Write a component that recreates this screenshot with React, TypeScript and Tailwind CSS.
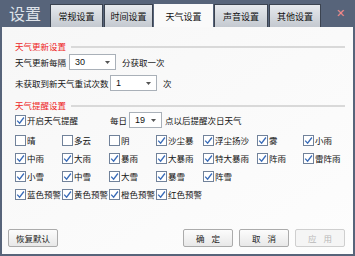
import React from "react";

const font = { fontFamily: '"Noto Sans CJK SC", "Noto Sans", sans-serif' };

function Check({ checked, label }: { checked: boolean; label: string }) {
  return (
    <div className="flex items-center gap-[1px]">
      <div className="w-[11px] h-[11px] border border-[#71829a] bg-white flex items-center justify-center shrink-0">
        {checked && (
          <svg width="9" height="9" viewBox="0 0 9 9">
            <path d="M1.2 4.6 L3.6 7.2 L7.9 1.5" stroke="#3a6cb8" strokeWidth="1.3" fill="none" />
          </svg>
        )}
      </div>
      <span className="text-[8.5px] leading-none text-[#111] whitespace-nowrap">{label}</span>
    </div>
  );
}

function Select({ value, w }: { value: string; w: string }) {
  return (
    <div className={`${w} h-[16px] border border-[#a9b0b8] bg-white flex items-center justify-between pl-[5px] pr-[5px] shrink-0`}>
      <span className="text-[9px] leading-none text-[#111]" style={{ fontFamily: '"Liberation Sans", sans-serif' }}>{value}</span>
      <svg width="5" height="3" viewBox="0 0 5 3">
        <path d="M0 0 L5 0 L2.5 3 Z" fill="#555" />
      </svg>
    </div>
  );
}

function Section({ title }: { title: string }) {
  return (
    <div className="flex items-center gap-[5px] h-[11px] pl-[13px] pr-[8px]">
      <span className="text-[8.5px] leading-none text-[#ee1c24] whitespace-nowrap">{title}</span>
      <div className="flex-1 h-[2px] bg-[#d9d9d9]" />
    </div>
  );
}

function Btn({ label, disabled, spaced }: { label: string; disabled?: boolean; spaced?: boolean }) {
  return (
    <div
      className={`w-[50px] h-[18px] border rounded-[2px] flex items-center justify-center text-[8.5px] leading-none whitespace-nowrap ${
        spaced ? "gap-[7px]" : "gap-0"
      } ${
        disabled
          ? "border-[#cfcfcf] text-[#b8b8b8] bg-[#f5f5f5]"
          : "border-[#ababab] text-[#222] bg-gradient-to-b from-[#fcfcfc] to-[#e8e8e8]"
      }`}
    >
      {label.split("").map((c, i) => (
        <span key={i}>{c}</span>
      ))}
    </div>
  );
}

const cols = ["w-[47px]", "w-[47px]", "w-[47px]", "w-[47px]", "w-[54px]", "w-[46px]", "w-[46px]"];

const rows: [string, boolean][][] = [
  [["晴", false], ["多云", false], ["阴", false], ["沙尘暴", true], ["浮尘扬沙", true], ["雾", true], ["小雨", true]],
  [["中雨", true], ["大雨", true], ["暴雨", true], ["大暴雨", true], ["特大暴雨", true], ["阵雨", true], ["雷阵雨", true]],
  [["小雪", true], ["中雪", true], ["大雪", true], ["暴雪", true], ["阵雪", true]],
  [["蓝色预警", true], ["黄色预警", true], ["橙色预警", true], ["红色预警", true]],
];

const tabs: [string, string][] = [
  ["常规设置", "w-[53px]"],
  ["时间设置", "w-[49px]"],
  ["天气设置", "w-[59px]"],
  ["声音设置", "w-[54px]"],
  ["其他设置", "w-[52px]"],
];

export default function App() {
  return (
    <div className="w-[355px] h-[256px] bg-[#57647a] flex flex-col overflow-hidden" style={font}>
      <div className="h-[27px] flex items-end relative shrink-0">
        <div className="absolute left-[9px] top-[4px] text-[16px] leading-[19px] text-[#dfe3ea]">设置</div>
        <div className="flex items-end gap-[1px] ml-[50px]">
          {tabs.map(([t, w]) => (
            <div
              key={t}
              className={`${w} h-[23px] flex items-center justify-center text-[9px] leading-none border border-b-0 whitespace-nowrap ${
                t === "天气设置"
                  ? "bg-[#fafafa] border-[#fafafa] text-[#111]"
                  : "bg-gradient-to-b from-[#e6e9ed] to-[#c4c9d0] border-[#3b4350] text-[#111]"
              }`}
            >
              {t}
            </div>
          ))}
        </div>
        <div className="absolute right-[10px] top-[7px] text-[#f28b8b] text-[11px] leading-none">✕</div>
      </div>
      <div className="flex-1 mx-[2px] mb-[2px] bg-gradient-to-br from-[#f7f7f7] to-[#fdfdfd] flex flex-col">
        <div className="mt-[14px]">
          <Section title="天气更新设置" />
        </div>
        <div className="flex items-center mt-[2px] pl-[13px] text-[8.5px] text-[#111] leading-none whitespace-nowrap">
          <span className="w-[54px]">天气更新每隔</span>
          <Select value="30" w="w-[47px]" />
          <span className="ml-[6px]">分获取一次</span>
        </div>
        <div className="flex items-center mt-[5px] pl-[13px] text-[8.5px] text-[#111] leading-none whitespace-nowrap">
          <span className="w-[95px]">未获取到新天气重试次数</span>
          <Select value="1" w="w-[47px]" />
          <span className="ml-[6px]">次</span>
        </div>
        <div className="mt-[9px]">
          <Section title="天气提醒设置" />
        </div>
        <div className="flex items-center mt-[1px] pl-[13px] text-[8.5px] text-[#111] leading-none whitespace-nowrap">
          <div className="w-[95px]">
            <Check checked label="开启天气提醒" />
          </div>
          <span className="w-[19px]">每日</span>
          <Select value="19" w="w-[33px]" />
          <span className="ml-[3px]">点以后提醒次日天气</span>
        </div>
        <div className="flex flex-col gap-[6px] mt-[6px] pl-[13px]">
          {rows.map((r, i) => (
            <div key={i} className="flex h-[12px] items-center">
              {r.map(([l, c], j) => (
                <div key={l} className={`${cols[j]} shrink-0`}>
                  <Check checked={c} label={l} />
                </div>
              ))}
            </div>
          ))}
        </div>
        <div className="mt-auto mb-[7px] flex items-center pl-[6px] pr-[8px]">
          <Btn label="恢复默认" />
          <div className="flex-1" />
          <div className="flex gap-[6px]">
            <Btn label="确定" spaced />
            <Btn label="取消" spaced />
            <Btn label="应用" spaced disabled />
          </div>
        </div>
      </div>
    </div>
  );
}
